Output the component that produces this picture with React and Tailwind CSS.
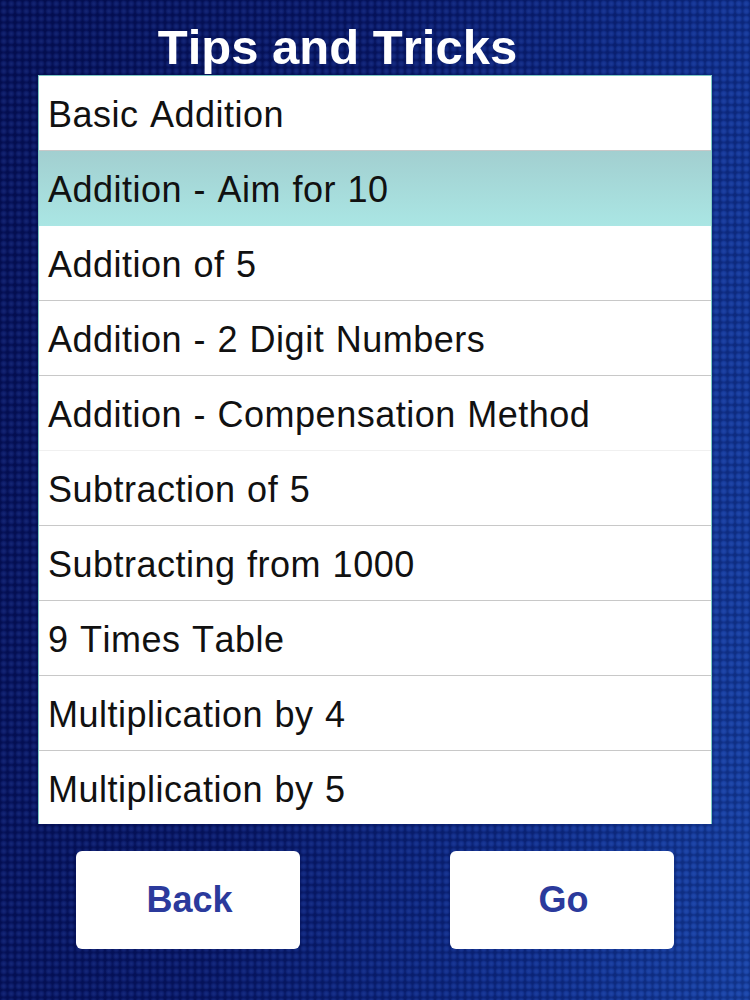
const items = [
  ["Basic Addition", false],
  ["Addition - Aim for 10", true],
  ["Addition of 5", false],
  ["Addition - 2 Digit Numbers", false],
  ["Addition - Compensation Method", false],
  ["Subtraction of 5", false],
  ["Subtracting from 1000", false],
  ["9 Times Table", false],
  ["Multiplication by 4", false],
  ["Multiplication by 5", false],
];

export default function App() {
  return (
    <div className="relative flex h-[1000px] w-[750px] flex-col overflow-hidden bg-[linear-gradient(100deg,#04105a_0%,#061668_40%,#0d2c8c_75%,#1540a4_100%)] font-['Liberation_Sans',Arial,sans-serif] [font-kerning:none]">
      <div className="pointer-events-none absolute inset-0 bg-[radial-gradient(circle,rgba(120,160,255,0.16)_0,rgba(120,160,255,0.08)_40%,rgba(0,0,30,0.2)_75%)] bg-[length:7.5px_7.5px]" />
      <div className="relative flex flex-1 flex-col">
        <h1 className="h-[75px] pt-[20px] pr-[75px] text-center text-[49px] leading-[54px] font-bold text-white">
          Tips and Tricks
        </h1>
        <ul className="mx-[38px] h-[749px] border-x border-t border-[#7cc8c4] bg-white">
          {items.map(([label, selected], i) => (
            <li
              key={label}
              className={`flex h-[75px] items-center pt-[3px] pl-[9px] text-[36px] tracking-[0.5px] [word-spacing:1px] text-[#111] ${
                selected
                  ? "bg-[linear-gradient(to_bottom,#a2cfd0,#aae6e4)]"
                  : i === 4
                    ? "border-b border-[#f0f0f0]"
                    : i === 9
                      ? ""
                      : "border-b border-[#c8c8c8]"
              }`}
            >
              {label}
            </li>
          ))}
        </ul>
        <div className="mt-[27px] flex justify-between pr-[76px] pl-[76px]">
          <button className="h-[98px] w-[224px] rounded-[6px] bg-white pl-[3px] text-[36px] font-bold text-[#2b3a9c]">
            Back
          </button>
          <button className="h-[98px] w-[224px] rounded-[6px] bg-white pl-[3px] text-[36px] font-bold text-[#2b3a9c]">
            Go
          </button>
        </div>
      </div>
    </div>
  );
}
